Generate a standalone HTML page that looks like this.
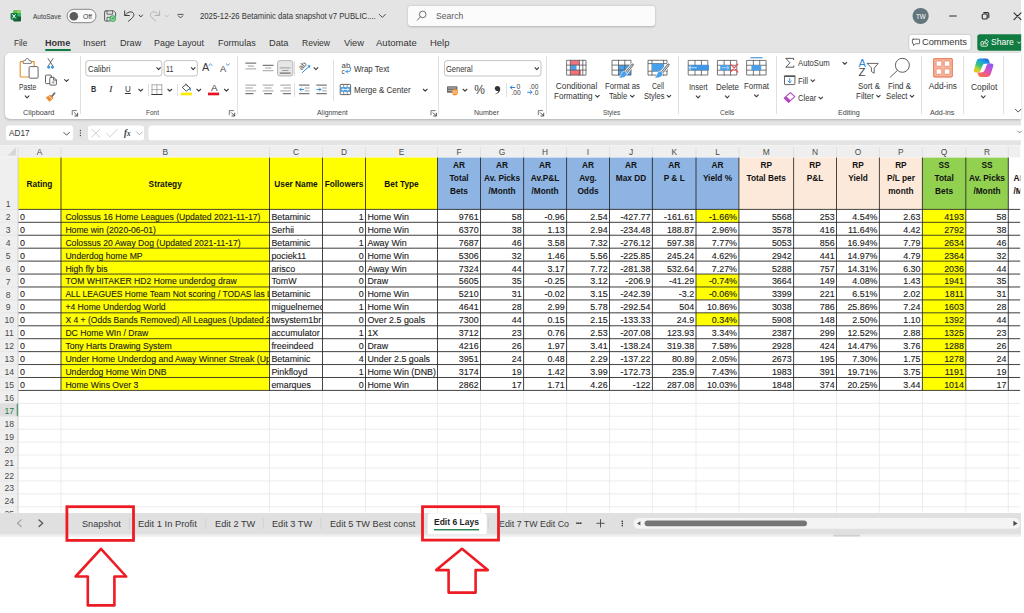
<!DOCTYPE html>
<html lang="en"><head><meta charset="utf-8"><title>Excel - Betaminic data snapshot</title>
<style>
html,body{margin:0;padding:0;background:#fff;}
body{width:1024px;height:613px;overflow:hidden;font-family:"Liberation Sans",sans-serif;color:#343434;}
#app{position:relative;width:1024px;height:613px;overflow:hidden;background:#fff;}
#app div, #app svg{position:absolute;}
.t{position:absolute;white-space:pre;line-height:1;transform-origin:0 50%;}
#chrome{left:0;top:0;width:1021.2px;height:145.3px;background:#e4e4e4;}
#ribbon{left:5.2px;top:52.6px;width:1016px;height:66.2px;background:#fff;border-radius:5px 0 0 5px;box-shadow:0 1px 2.5px rgba(0,0,0,.22);}
.box{background:#fff;border-radius:2.5px;}
.inp{background:#fff;border:0.7px solid #b9b9b9;border-radius:2.5px;box-sizing:border-box;}
.vsep{width:0.7px;background:#e0e0e0;}
#tabbar{left:0;top:512.8px;width:1021.2px;height:21px;background:#e0e0e0;}
#tabstrip{left:0;top:533.8px;width:1021.2px;height:3.2px;background:linear-gradient(#e9e9e9,#f4f4f4);}
#overlay{left:0;top:0;}
#labels{left:0;top:0;width:1024px;height:613px;}

</style></head>
<body>
<div id="app">
<div id="chrome"></div><div id="ribbon"></div><div style="left:408.2px;top:5.8px;width:246.4px;height:20.5px;border-radius:2.4px;background:#fbfbfb;box-shadow:0 0.8px 2.2px rgba(0,0,0,.22);"></div><div style="left:45px;top:48.7px;width:26.2px;height:2.1px;background:#107c41;border-radius:1px;"></div><div class="vsep" style="left:79.85000000000001px;top:56.4px;height:57.4px;"></div><div class="vsep" style="left:236.85px;top:56.4px;height:57.4px;"></div><div class="vsep" style="left:438.34999999999997px;top:56.4px;height:57.4px;"></div><div class="vsep" style="left:545.9499999999999px;top:56.4px;height:57.4px;"></div><div class="vsep" style="left:678.35px;top:56.4px;height:57.4px;"></div><div class="vsep" style="left:775.9499999999999px;top:56.4px;height:57.4px;"></div><div class="vsep" style="left:920.85px;top:56.4px;height:57.4px;"></div><div class="vsep" style="left:963.15px;top:56.4px;height:57.4px;"></div><div class="vsep" style="left:1003.15px;top:56.4px;height:57.4px;"></div><div class="vsep" style="left:333.45px;top:60px;height:41px;"></div><div class="vsep" style="left:147.65px;top:83.5px;height:12.5px;"></div><div class="vsep" style="left:176.65px;top:83.5px;height:12.5px;"></div><div class="vsep" style="left:294.15px;top:82.5px;height:14.5px;"></div><div class="vsep" style="left:294.15px;top:60.5px;height:15.5px;"></div><div class="vsep" style="left:505.95px;top:82.5px;height:14.5px;"></div><div id="tabbar"></div><div id="tabstrip"></div><svg id="overlay" width="1024" height="613" viewBox="0 0 1024 613" font-family="Liberation Sans, sans-serif">
<clipPath id="capp"><rect x="0" y="0" width="1021.2" height="613"/></clipPath><g clip-path="url(#capp)">
<rect x="67.1" y="9.3" width="28.9" height="13.4" rx="6.7" fill="#fafafa" stroke="#868686" stroke-width="1.0"/>
<circle cx="73.8" cy="16.2" r="4.3" fill="#5c5c5c"/>
<circle cx="920.6" cy="16" r="8.1" fill="#63747a"/>
<rect x="908.8" y="34.4" width="62.3" height="15.9" rx="2.6" fill="#fff" stroke="#c6c6c6" stroke-width="0.8"/>
<rect x="977.3" y="34.2" width="50" height="16.5" rx="2.6" fill="#107c41" stroke="none" stroke-width="0.8"/>
<rect x="85.8" y="60.6" width="76.1" height="15.4" rx="2.6" fill="#fff" stroke="#b4b4b4" stroke-width="0.8"/>
<rect x="164.2" y="60.6" width="33.2" height="15.4" rx="2.6" fill="#fff" stroke="#b4b4b4" stroke-width="0.8"/>
<rect x="444.4" y="60.6" width="96.6" height="15.4" rx="2.6" fill="#fff" stroke="#b4b4b4" stroke-width="0.8"/>
<rect x="277.5" y="60.6" width="15.4" height="15.4" rx="2.6" fill="#e6e6e6" stroke="#a6a6a6" stroke-width="0.8"/>
<rect x="6" y="125.5" width="67" height="14.7" rx="2.5" fill="#fff" stroke="none" stroke-width="0.8"/>
<rect x="88" y="125.5" width="56" height="14.7" rx="2.5" fill="#fff" stroke="none" stroke-width="0.8"/>
<rect x="148.5" y="125.5" width="880" height="14.7" rx="2.5" fill="#fff" stroke="none" stroke-width="0.8"/>
</g>
<rect x="0" y="145.3" width="1020.2" height="12.299999999999983" fill="#efefef"/>
<rect x="0" y="157.6" width="18.1" height="355.19999999999993" fill="#efefef"/>
<rect x="18.1" y="157.6" width="1002.1" height="355.19999999999993" fill="#ffffff"/>
<rect x="0" y="403.35" width="18.1" height="12.93" fill="#dedede"/>
<rect x="16.8" y="403.35" width="1.3" height="12.93" fill="#1e7b45"/>
<path d="M15.8 147.6V155.6H7.8Z" fill="#d6d6d6"/>
<path d="M61 157.6V512.8 M269.5 157.6V512.8 M322.5 157.6V512.8 M365.5 157.6V512.8 M437.5 157.6V512.8 M480.5 157.6V512.8 M523.6 157.6V512.8 M566.6 157.6V512.8 M609.5 157.6V512.8 M652.4 157.6V512.8 M696 157.6V512.8 M738.9 157.6V512.8 M793.6 157.6V512.8 M836.5 157.6V512.8 M879.4 157.6V512.8 M922.4 157.6V512.8 M965.8 157.6V512.8 M1008.3 157.6V512.8 M18.1 209.40H1020.2 M18.1 222.33H1020.2 M18.1 235.26H1020.2 M18.1 248.19H1020.2 M18.1 261.12H1020.2 M18.1 274.05H1020.2 M18.1 286.98H1020.2 M18.1 299.91H1020.2 M18.1 312.84H1020.2 M18.1 325.77H1020.2 M18.1 338.70H1020.2 M18.1 351.63H1020.2 M18.1 364.56H1020.2 M18.1 377.49H1020.2 M18.1 390.42H1020.2 M18.1 403.35H1020.2 M18.1 416.28H1020.2 M18.1 429.21H1020.2 M18.1 442.14H1020.2 M18.1 455.07H1020.2 M18.1 468.00H1020.2 M18.1 480.93H1020.2 M18.1 493.86H1020.2 M18.1 506.79H1020.2" stroke="#e7e7e7" stroke-width="0.8" fill="none"/>
<path d="M18.1 147.3V157.6 M61 147.3V157.6 M269.5 147.3V157.6 M322.5 147.3V157.6 M365.5 147.3V157.6 M437.5 147.3V157.6 M480.5 147.3V157.6 M523.6 147.3V157.6 M566.6 147.3V157.6 M609.5 147.3V157.6 M652.4 147.3V157.6 M696 147.3V157.6 M738.9 147.3V157.6 M793.6 147.3V157.6 M836.5 147.3V157.6 M879.4 147.3V157.6 M922.4 147.3V157.6 M965.8 147.3V157.6 M1008.3 147.3V157.6" stroke="#dadada" stroke-width="0.7" fill="none"/>
<path d="M0 209.40H18.1 M0 222.33H18.1 M0 235.26H18.1 M0 248.19H18.1 M0 261.12H18.1 M0 274.05H18.1 M0 286.98H18.1 M0 299.91H18.1 M0 312.84H18.1 M0 325.77H18.1 M0 338.70H18.1 M0 351.63H18.1 M0 364.56H18.1 M0 377.49H18.1 M0 390.42H18.1 M0 403.35H18.1 M0 416.28H18.1 M0 429.21H18.1 M0 442.14H18.1 M0 455.07H18.1 M0 468.00H18.1 M0 480.93H18.1 M0 493.86H18.1 M0 506.79H18.1" stroke="#e2e2e2" stroke-width="0.6" fill="none"/>
<rect x="18.1" y="157.60" width="419.40" height="51.80" fill="#ffff00"/>
<rect x="437.5" y="157.60" width="301.40" height="51.80" fill="#8db4e2"/>
<rect x="738.9" y="157.60" width="183.50" height="51.80" fill="#fde9d9"/>
<rect x="922.4" y="157.60" width="85.90" height="51.80" fill="#92d050"/>
<rect x="61" y="209.40" width="208.50" height="181.02" fill="#ffff00"/>
<rect x="922.4" y="209.40" width="43.40" height="181.02" fill="#ffff00"/>
<rect x="696" y="209.40" width="42.90" height="12.93" fill="#ffff00"/>
<rect x="696" y="274.05" width="42.90" height="12.93" fill="#ffff00"/>
<rect x="696" y="286.98" width="42.90" height="12.93" fill="#ffff00"/>
<rect x="696" y="312.84" width="42.90" height="12.93" fill="#ffff00"/>
<path d="M61 157.6V390.42 M269.5 157.6V390.42 M322.5 157.6V390.42 M365.5 157.6V390.42 M437.5 157.6V390.42 M480.5 157.6V390.42 M523.6 157.6V390.42 M566.6 157.6V390.42 M609.5 157.6V390.42 M652.4 157.6V390.42 M696 157.6V390.42 M738.9 157.6V390.42 M793.6 157.6V390.42 M836.5 157.6V390.42 M879.4 157.6V390.42 M922.4 157.6V390.42 M965.8 157.6V390.42 M1008.3 157.6V390.42 M18.1 209.4H1020.2 M18.1 222.33H1020.2 M18.1 235.26H1020.2 M18.1 248.19H1020.2 M18.1 261.12H1020.2 M18.1 274.05H1020.2 M18.1 286.98H1020.2 M18.1 299.91H1020.2 M18.1 312.84H1020.2 M18.1 325.77H1020.2 M18.1 338.70H1020.2 M18.1 351.63H1020.2 M18.1 364.56H1020.2 M18.1 377.49H1020.2 M18.1 390.42H1020.2" stroke="#262626" stroke-width="0.85" fill="none"/>
<path d="M18.1 157.6V512.8" stroke="#cbcbcb" stroke-width="0.9" fill="none"/>
<text x="39.5" y="154.9" font-size="8.4" fill="#4a4a4a" text-anchor="middle">A</text>
<text x="165.2" y="154.9" font-size="8.4" fill="#4a4a4a" text-anchor="middle">B</text>
<text x="296.0" y="154.9" font-size="8.4" fill="#4a4a4a" text-anchor="middle">C</text>
<text x="344.0" y="154.9" font-size="8.4" fill="#4a4a4a" text-anchor="middle">D</text>
<text x="401.5" y="154.9" font-size="8.4" fill="#4a4a4a" text-anchor="middle">E</text>
<text x="459.0" y="154.9" font-size="8.4" fill="#4a4a4a" text-anchor="middle">F</text>
<text x="502.1" y="154.9" font-size="8.4" fill="#4a4a4a" text-anchor="middle">G</text>
<text x="545.1" y="154.9" font-size="8.4" fill="#4a4a4a" text-anchor="middle">H</text>
<text x="588.0" y="154.9" font-size="8.4" fill="#4a4a4a" text-anchor="middle">I</text>
<text x="631.0" y="154.9" font-size="8.4" fill="#4a4a4a" text-anchor="middle">J</text>
<text x="674.2" y="154.9" font-size="8.4" fill="#4a4a4a" text-anchor="middle">K</text>
<text x="717.5" y="154.9" font-size="8.4" fill="#4a4a4a" text-anchor="middle">L</text>
<text x="766.2" y="154.9" font-size="8.4" fill="#4a4a4a" text-anchor="middle">M</text>
<text x="815.0" y="154.9" font-size="8.4" fill="#4a4a4a" text-anchor="middle">N</text>
<text x="858.0" y="154.9" font-size="8.4" fill="#4a4a4a" text-anchor="middle">O</text>
<text x="900.9" y="154.9" font-size="8.4" fill="#4a4a4a" text-anchor="middle">P</text>
<text x="944.1" y="154.9" font-size="8.4" fill="#4a4a4a" text-anchor="middle">Q</text>
<text x="987.0" y="154.9" font-size="8.4" fill="#4a4a4a" text-anchor="middle">R</text>
<clipPath id="crn"><rect x="0" y="157.6" width="18.1" height="355.19999999999993"/></clipPath><g clip-path="url(#crn)">
<text x="8.2" y="207.00" font-size="8.6" fill="#4a4a4a" text-anchor="middle">1</text>
<text x="8.2" y="219.93" font-size="8.6" fill="#4a4a4a" text-anchor="middle">2</text>
<text x="8.2" y="232.86" font-size="8.6" fill="#4a4a4a" text-anchor="middle">3</text>
<text x="8.2" y="245.79" font-size="8.6" fill="#4a4a4a" text-anchor="middle">4</text>
<text x="8.2" y="258.72" font-size="8.6" fill="#4a4a4a" text-anchor="middle">5</text>
<text x="8.2" y="271.65" font-size="8.6" fill="#4a4a4a" text-anchor="middle">6</text>
<text x="8.2" y="284.58" font-size="8.6" fill="#4a4a4a" text-anchor="middle">7</text>
<text x="8.2" y="297.51" font-size="8.6" fill="#4a4a4a" text-anchor="middle">8</text>
<text x="8.2" y="310.44" font-size="8.6" fill="#4a4a4a" text-anchor="middle">9</text>
<text x="9.2" y="323.37" font-size="8.6" fill="#4a4a4a" text-anchor="middle">10</text>
<text x="9.2" y="336.30" font-size="8.6" fill="#4a4a4a" text-anchor="middle">11</text>
<text x="9.2" y="349.23" font-size="8.6" fill="#4a4a4a" text-anchor="middle">12</text>
<text x="9.2" y="362.16" font-size="8.6" fill="#4a4a4a" text-anchor="middle">13</text>
<text x="9.2" y="375.09" font-size="8.6" fill="#4a4a4a" text-anchor="middle">14</text>
<text x="9.2" y="388.02" font-size="8.6" fill="#4a4a4a" text-anchor="middle">15</text>
<text x="9.2" y="400.95" font-size="8.6" fill="#4a4a4a" text-anchor="middle">16</text>
<text x="9.2" y="413.88" font-size="8.6" fill="#1e7b45" text-anchor="middle">17</text>
<text x="9.2" y="426.81" font-size="8.6" fill="#4a4a4a" text-anchor="middle">18</text>
<text x="9.2" y="439.74" font-size="8.6" fill="#4a4a4a" text-anchor="middle">19</text>
<text x="9.2" y="452.67" font-size="8.6" fill="#4a4a4a" text-anchor="middle">20</text>
<text x="9.2" y="465.60" font-size="8.6" fill="#4a4a4a" text-anchor="middle">21</text>
<text x="9.2" y="478.53" font-size="8.6" fill="#4a4a4a" text-anchor="middle">22</text>
<text x="9.2" y="491.46" font-size="8.6" fill="#4a4a4a" text-anchor="middle">23</text>
<text x="9.2" y="504.39" font-size="8.6" fill="#4a4a4a" text-anchor="middle">24</text>
<text x="9.2" y="517.32" font-size="8.6" fill="#4a4a4a" text-anchor="middle">25</text>
</g>
<text x="39.5" y="187.3" font-size="8.3" font-weight="700" fill="#111" text-anchor="middle">Rating</text>
<text x="165.2" y="187.3" font-size="8.3" font-weight="700" fill="#111" text-anchor="middle">Strategy</text>
<text x="296.0" y="187.3" font-size="8.3" font-weight="700" fill="#111" text-anchor="middle">User Name</text>
<text x="344.0" y="187.3" font-size="8.3" font-weight="700" fill="#111" text-anchor="middle">Followers</text>
<text x="401.5" y="187.3" font-size="8.3" font-weight="700" fill="#111" text-anchor="middle">Bet Type</text>
<text x="459.0" y="167.90" font-size="8.3" font-weight="700" fill="#111" text-anchor="middle">AR</text>
<text x="459.0" y="180.85" font-size="8.3" font-weight="700" fill="#111" text-anchor="middle">Total</text>
<text x="459.0" y="193.80" font-size="8.3" font-weight="700" fill="#111" text-anchor="middle">Bets</text>
<text x="502.1" y="167.90" font-size="8.3" font-weight="700" fill="#111" text-anchor="middle">AR</text>
<text x="502.1" y="180.85" font-size="8.3" font-weight="700" fill="#111" text-anchor="middle">Av. Picks</text>
<text x="502.1" y="193.80" font-size="8.3" font-weight="700" fill="#111" text-anchor="middle">/Month</text>
<text x="545.1" y="167.90" font-size="8.3" font-weight="700" fill="#111" text-anchor="middle">AR</text>
<text x="545.1" y="180.85" font-size="8.3" font-weight="700" fill="#111" text-anchor="middle">Av.P&amp;L</text>
<text x="545.1" y="193.80" font-size="8.3" font-weight="700" fill="#111" text-anchor="middle">/Month</text>
<text x="588.0" y="167.90" font-size="8.3" font-weight="700" fill="#111" text-anchor="middle">AR</text>
<text x="588.0" y="180.85" font-size="8.3" font-weight="700" fill="#111" text-anchor="middle">Avg.</text>
<text x="588.0" y="193.80" font-size="8.3" font-weight="700" fill="#111" text-anchor="middle">Odds</text>
<text x="631.0" y="167.90" font-size="8.3" font-weight="700" fill="#111" text-anchor="middle">AR</text>
<text x="631.0" y="180.85" font-size="8.3" font-weight="700" fill="#111" text-anchor="middle">Max DD</text>
<text x="674.2" y="167.90" font-size="8.3" font-weight="700" fill="#111" text-anchor="middle">AR</text>
<text x="674.2" y="180.85" font-size="8.3" font-weight="700" fill="#111" text-anchor="middle">P &amp; L</text>
<text x="717.5" y="167.90" font-size="8.3" font-weight="700" fill="#111" text-anchor="middle">AR</text>
<text x="717.5" y="180.85" font-size="8.3" font-weight="700" fill="#111" text-anchor="middle">Yield %</text>
<text x="766.2" y="167.90" font-size="8.3" font-weight="700" fill="#111" text-anchor="middle">RP</text>
<text x="766.2" y="180.85" font-size="8.3" font-weight="700" fill="#111" text-anchor="middle">Total Bets</text>
<text x="815.0" y="167.90" font-size="8.3" font-weight="700" fill="#111" text-anchor="middle">RP</text>
<text x="815.0" y="180.85" font-size="8.3" font-weight="700" fill="#111" text-anchor="middle">P&amp;L</text>
<text x="858.0" y="167.90" font-size="8.3" font-weight="700" fill="#111" text-anchor="middle">RP</text>
<text x="858.0" y="180.85" font-size="8.3" font-weight="700" fill="#111" text-anchor="middle">Yield</text>
<text x="900.9" y="167.90" font-size="8.3" font-weight="700" fill="#111" text-anchor="middle">RP</text>
<text x="900.9" y="180.85" font-size="8.3" font-weight="700" fill="#111" text-anchor="middle">P/L per</text>
<text x="900.9" y="193.80" font-size="8.3" font-weight="700" fill="#111" text-anchor="middle">month</text>
<text x="944.1" y="167.90" font-size="8.3" font-weight="700" fill="#111" text-anchor="middle">SS</text>
<text x="944.1" y="180.85" font-size="8.3" font-weight="700" fill="#111" text-anchor="middle">Total</text>
<text x="944.1" y="193.80" font-size="8.3" font-weight="700" fill="#111" text-anchor="middle">Bets</text>
<text x="987.0" y="167.90" font-size="8.3" font-weight="700" fill="#111" text-anchor="middle">SS</text>
<text x="987.0" y="180.85" font-size="8.3" font-weight="700" fill="#111" text-anchor="middle">Av. Picks</text>
<text x="987.0" y="193.80" font-size="8.3" font-weight="700" fill="#111" text-anchor="middle">/Month</text>
<clipPath id="cs"><rect x="1008.3" y="157.6" width="12.0" height="60"/></clipPath>
<g clip-path="url(#cs)"><text x="1013.6" y="180.85" font-size="8.3" font-weight="700" fill="#111">AR</text><text x="1013.4" y="193.8" font-size="8.3" font-weight="700" fill="#111">/Month</text></g>
<clipPath id="cc1"><rect x="61" y="209.4" width="207.9" height="181.01999999999995"/></clipPath>
<clipPath id="cc2"><rect x="269.5" y="209.4" width="52.4" height="181.01999999999995"/></clipPath>
<clipPath id="cc4"><rect x="365.5" y="209.4" width="71.4" height="181.01999999999995"/></clipPath>
<g font-size="8.9" fill="#1c1c1c" stroke="#1c1c1c" stroke-width="0.12"><text x="20.10" y="219.78">0</text><text x="20.10" y="232.71">0</text><text x="20.10" y="245.64">0</text><text x="20.10" y="258.57">0</text><text x="20.10" y="271.50">0</text><text x="20.10" y="284.43">0</text><text x="20.10" y="297.36">0</text><text x="20.10" y="310.29">0</text><text x="20.10" y="323.22">0</text><text x="20.10" y="336.15">0</text><text x="20.10" y="349.08">0</text><text x="20.10" y="362.01">0</text><text x="20.10" y="374.94">0</text><text x="20.10" y="387.87">0</text></g>
<g font-size="8.65" fill="#1c1c1c" stroke="#1c1c1c" stroke-width="0.12" clip-path="url(#cc1)"><text x="65.40" y="219.78">Colossus 16 Home Leagues (Updated 2021-11-17)</text><text x="65.40" y="232.71">Home win (2020-06-01)</text><text x="65.40" y="245.64">Colossus 20 Away Dog (Updated 2021-11-17)</text><text x="65.40" y="258.57">Underdog home MP</text><text x="65.40" y="271.50">High fly bis</text><text x="65.40" y="284.43">TOM WHITAKER HD2 Home underdog draw</text><text x="65.40" y="297.36" font-size="8.48">ALL LEAGUES Home Team Not scoring / TODAS las Ligas</text><text x="65.40" y="310.29">+4 Home Underdog World</text><text x="65.40" y="323.22" font-size="8.55">X 4 + (Odds Bands Removed) All Leagues (Updated 2021-11-17)</text><text x="65.40" y="336.15">DC Home WIn / Draw</text><text x="65.40" y="349.08">Tony Harts Drawing System</text><text x="65.40" y="362.01" font-size="8.78">Under Home Underdog and Away Winner Streak (Updated 2021-11-17)</text><text x="65.40" y="374.94">Underdog Home Win DNB</text><text x="65.40" y="387.87">Home Wins Over 3</text></g>
<g font-size="8.9" fill="#1c1c1c" stroke="#1c1c1c" stroke-width="0.12" clip-path="url(#cc2)"><text x="271.40" y="219.78">Betaminic</text><text x="271.40" y="232.71">Serhii</text><text x="271.40" y="245.64">Betaminic</text><text x="271.40" y="258.57">pociek11</text><text x="271.40" y="271.50">arisco</text><text x="271.40" y="284.43">TomW</text><text x="271.40" y="297.36">Betaminic</text><text x="271.40" y="310.29">miguelnemec</text><text x="271.40" y="323.22">twsystem1br</text><text x="271.40" y="336.15">accumulator</text><text x="271.40" y="349.08">freeindeed</text><text x="271.40" y="362.01">Betaminic</text><text x="271.40" y="374.94">Pinkfloyd</text><text x="271.40" y="387.87">emarques</text></g>
<g font-size="8.9" fill="#1c1c1c" stroke="#1c1c1c" stroke-width="0.12"><text x="363.60" y="219.78" text-anchor="end">1</text><text x="363.60" y="232.71" text-anchor="end">0</text><text x="363.60" y="245.64" text-anchor="end">1</text><text x="363.60" y="258.57" text-anchor="end">0</text><text x="363.60" y="271.50" text-anchor="end">0</text><text x="363.60" y="284.43" text-anchor="end">0</text><text x="363.60" y="297.36" text-anchor="end">0</text><text x="363.60" y="310.29" text-anchor="end">1</text><text x="363.60" y="323.22" text-anchor="end">0</text><text x="363.60" y="336.15" text-anchor="end">1</text><text x="363.60" y="349.08" text-anchor="end">0</text><text x="363.60" y="362.01" text-anchor="end">4</text><text x="363.60" y="374.94" text-anchor="end">1</text><text x="363.60" y="387.87" text-anchor="end">0</text></g>
<g font-size="8.9" fill="#1c1c1c" stroke="#1c1c1c" stroke-width="0.12" clip-path="url(#cc4)"><text x="367.40" y="219.78">Home Win</text><text x="367.40" y="232.71">Home Win</text><text x="367.40" y="245.64">Away Win</text><text x="367.40" y="258.57">Home Win</text><text x="367.40" y="271.50">Away Win</text><text x="367.40" y="284.43">Draw</text><text x="367.40" y="297.36">Home Win</text><text x="367.40" y="310.29">Home Win</text><text x="367.40" y="323.22">Over 2.5 goals</text><text x="367.40" y="336.15">1X</text><text x="367.40" y="349.08">Draw</text><text x="367.40" y="362.01">Under 2.5 goals</text><text x="367.40" y="374.94">Home Win (DNB)</text><text x="367.40" y="387.87">Home Win</text></g>
<g font-size="8.9" fill="#1c1c1c" stroke="#1c1c1c" stroke-width="0.12"><text x="478.60" y="219.78" text-anchor="end">9761</text><text x="478.60" y="232.71" text-anchor="end">6370</text><text x="478.60" y="245.64" text-anchor="end">7687</text><text x="478.60" y="258.57" text-anchor="end">5306</text><text x="478.60" y="271.50" text-anchor="end">7324</text><text x="478.60" y="284.43" text-anchor="end">5605</text><text x="478.60" y="297.36" text-anchor="end">5210</text><text x="478.60" y="310.29" text-anchor="end">4641</text><text x="478.60" y="323.22" text-anchor="end">7300</text><text x="478.60" y="336.15" text-anchor="end">3712</text><text x="478.60" y="349.08" text-anchor="end">4216</text><text x="478.60" y="362.01" text-anchor="end">3951</text><text x="478.60" y="374.94" text-anchor="end">3174</text><text x="478.60" y="387.87" text-anchor="end">2862</text></g>
<g font-size="8.9" fill="#1c1c1c" stroke="#1c1c1c" stroke-width="0.12"><text x="521.70" y="219.78" text-anchor="end">58</text><text x="521.70" y="232.71" text-anchor="end">38</text><text x="521.70" y="245.64" text-anchor="end">46</text><text x="521.70" y="258.57" text-anchor="end">32</text><text x="521.70" y="271.50" text-anchor="end">44</text><text x="521.70" y="284.43" text-anchor="end">35</text><text x="521.70" y="297.36" text-anchor="end">31</text><text x="521.70" y="310.29" text-anchor="end">28</text><text x="521.70" y="323.22" text-anchor="end">44</text><text x="521.70" y="336.15" text-anchor="end">23</text><text x="521.70" y="349.08" text-anchor="end">26</text><text x="521.70" y="362.01" text-anchor="end">24</text><text x="521.70" y="374.94" text-anchor="end">19</text><text x="521.70" y="387.87" text-anchor="end">17</text></g>
<g font-size="8.9" fill="#1c1c1c" stroke="#1c1c1c" stroke-width="0.12"><text x="564.70" y="219.78" text-anchor="end">-0.96</text><text x="564.70" y="232.71" text-anchor="end">1.13</text><text x="564.70" y="245.64" text-anchor="end">3.58</text><text x="564.70" y="258.57" text-anchor="end">1.46</text><text x="564.70" y="271.50" text-anchor="end">3.17</text><text x="564.70" y="284.43" text-anchor="end">-0.25</text><text x="564.70" y="297.36" text-anchor="end">-0.02</text><text x="564.70" y="310.29" text-anchor="end">2.99</text><text x="564.70" y="323.22" text-anchor="end">0.15</text><text x="564.70" y="336.15" text-anchor="end">0.76</text><text x="564.70" y="349.08" text-anchor="end">1.97</text><text x="564.70" y="362.01" text-anchor="end">0.48</text><text x="564.70" y="374.94" text-anchor="end">1.42</text><text x="564.70" y="387.87" text-anchor="end">1.71</text></g>
<g font-size="8.9" fill="#1c1c1c" stroke="#1c1c1c" stroke-width="0.12"><text x="607.60" y="219.78" text-anchor="end">2.54</text><text x="607.60" y="232.71" text-anchor="end">2.94</text><text x="607.60" y="245.64" text-anchor="end">7.32</text><text x="607.60" y="258.57" text-anchor="end">5.56</text><text x="607.60" y="271.50" text-anchor="end">7.72</text><text x="607.60" y="284.43" text-anchor="end">3.12</text><text x="607.60" y="297.36" text-anchor="end">3.15</text><text x="607.60" y="310.29" text-anchor="end">5.78</text><text x="607.60" y="323.22" text-anchor="end">2.15</text><text x="607.60" y="336.15" text-anchor="end">2.53</text><text x="607.60" y="349.08" text-anchor="end">3.41</text><text x="607.60" y="362.01" text-anchor="end">2.29</text><text x="607.60" y="374.94" text-anchor="end">3.99</text><text x="607.60" y="387.87" text-anchor="end">4.26</text></g>
<g font-size="8.9" fill="#1c1c1c" stroke="#1c1c1c" stroke-width="0.12"><text x="650.50" y="219.78" text-anchor="end">-427.77</text><text x="650.50" y="232.71" text-anchor="end">-234.48</text><text x="650.50" y="245.64" text-anchor="end">-276.12</text><text x="650.50" y="258.57" text-anchor="end">-225.85</text><text x="650.50" y="271.50" text-anchor="end">-281.38</text><text x="650.50" y="284.43" text-anchor="end">-206.9</text><text x="650.50" y="297.36" text-anchor="end">-242.39</text><text x="650.50" y="310.29" text-anchor="end">-292.54</text><text x="650.50" y="323.22" text-anchor="end">-133.33</text><text x="650.50" y="336.15" text-anchor="end">-207.08</text><text x="650.50" y="349.08" text-anchor="end">-138.24</text><text x="650.50" y="362.01" text-anchor="end">-137.22</text><text x="650.50" y="374.94" text-anchor="end">-172.73</text><text x="650.50" y="387.87" text-anchor="end">-122</text></g>
<g font-size="8.9" fill="#1c1c1c" stroke="#1c1c1c" stroke-width="0.12"><text x="694.10" y="219.78" text-anchor="end">-161.61</text><text x="694.10" y="232.71" text-anchor="end">188.87</text><text x="694.10" y="245.64" text-anchor="end">597.38</text><text x="694.10" y="258.57" text-anchor="end">245.24</text><text x="694.10" y="271.50" text-anchor="end">532.64</text><text x="694.10" y="284.43" text-anchor="end">-41.29</text><text x="694.10" y="297.36" text-anchor="end">-3.2</text><text x="694.10" y="310.29" text-anchor="end">504</text><text x="694.10" y="323.22" text-anchor="end">24.9</text><text x="694.10" y="336.15" text-anchor="end">123.93</text><text x="694.10" y="349.08" text-anchor="end">319.38</text><text x="694.10" y="362.01" text-anchor="end">80.89</text><text x="694.10" y="374.94" text-anchor="end">235.9</text><text x="694.10" y="387.87" text-anchor="end">287.08</text></g>
<g font-size="8.9" fill="#1c1c1c" stroke="#1c1c1c" stroke-width="0.12"><text x="737.00" y="219.78" text-anchor="end">-1.66%</text><text x="737.00" y="232.71" text-anchor="end">2.96%</text><text x="737.00" y="245.64" text-anchor="end">7.77%</text><text x="737.00" y="258.57" text-anchor="end">4.62%</text><text x="737.00" y="271.50" text-anchor="end">7.27%</text><text x="737.00" y="284.43" text-anchor="end">-0.74%</text><text x="737.00" y="297.36" text-anchor="end">-0.06%</text><text x="737.00" y="310.29" text-anchor="end">10.86%</text><text x="737.00" y="323.22" text-anchor="end">0.34%</text><text x="737.00" y="336.15" text-anchor="end">3.34%</text><text x="737.00" y="349.08" text-anchor="end">7.58%</text><text x="737.00" y="362.01" text-anchor="end">2.05%</text><text x="737.00" y="374.94" text-anchor="end">7.43%</text><text x="737.00" y="387.87" text-anchor="end">10.03%</text></g>
<g font-size="8.9" fill="#1c1c1c" stroke="#1c1c1c" stroke-width="0.12"><text x="791.70" y="219.78" text-anchor="end">5568</text><text x="791.70" y="232.71" text-anchor="end">3578</text><text x="791.70" y="245.64" text-anchor="end">5053</text><text x="791.70" y="258.57" text-anchor="end">2942</text><text x="791.70" y="271.50" text-anchor="end">5288</text><text x="791.70" y="284.43" text-anchor="end">3664</text><text x="791.70" y="297.36" text-anchor="end">3399</text><text x="791.70" y="310.29" text-anchor="end">3038</text><text x="791.70" y="323.22" text-anchor="end">5908</text><text x="791.70" y="336.15" text-anchor="end">2387</text><text x="791.70" y="349.08" text-anchor="end">2928</text><text x="791.70" y="362.01" text-anchor="end">2673</text><text x="791.70" y="374.94" text-anchor="end">1983</text><text x="791.70" y="387.87" text-anchor="end">1848</text></g>
<g font-size="8.9" fill="#1c1c1c" stroke="#1c1c1c" stroke-width="0.12"><text x="834.60" y="219.78" text-anchor="end">253</text><text x="834.60" y="232.71" text-anchor="end">416</text><text x="834.60" y="245.64" text-anchor="end">856</text><text x="834.60" y="258.57" text-anchor="end">441</text><text x="834.60" y="271.50" text-anchor="end">757</text><text x="834.60" y="284.43" text-anchor="end">149</text><text x="834.60" y="297.36" text-anchor="end">221</text><text x="834.60" y="310.29" text-anchor="end">786</text><text x="834.60" y="323.22" text-anchor="end">148</text><text x="834.60" y="336.15" text-anchor="end">299</text><text x="834.60" y="349.08" text-anchor="end">424</text><text x="834.60" y="362.01" text-anchor="end">195</text><text x="834.60" y="374.94" text-anchor="end">391</text><text x="834.60" y="387.87" text-anchor="end">374</text></g>
<g font-size="8.9" fill="#1c1c1c" stroke="#1c1c1c" stroke-width="0.12"><text x="877.50" y="219.78" text-anchor="end">4.54%</text><text x="877.50" y="232.71" text-anchor="end">11.64%</text><text x="877.50" y="245.64" text-anchor="end">16.94%</text><text x="877.50" y="258.57" text-anchor="end">14.97%</text><text x="877.50" y="271.50" text-anchor="end">14.31%</text><text x="877.50" y="284.43" text-anchor="end">4.08%</text><text x="877.50" y="297.36" text-anchor="end">6.51%</text><text x="877.50" y="310.29" text-anchor="end">25.86%</text><text x="877.50" y="323.22" text-anchor="end">2.50%</text><text x="877.50" y="336.15" text-anchor="end">12.52%</text><text x="877.50" y="349.08" text-anchor="end">14.47%</text><text x="877.50" y="362.01" text-anchor="end">7.30%</text><text x="877.50" y="374.94" text-anchor="end">19.71%</text><text x="877.50" y="387.87" text-anchor="end">20.25%</text></g>
<g font-size="8.9" fill="#1c1c1c" stroke="#1c1c1c" stroke-width="0.12"><text x="920.50" y="219.78" text-anchor="end">2.63</text><text x="920.50" y="232.71" text-anchor="end">4.42</text><text x="920.50" y="245.64" text-anchor="end">7.79</text><text x="920.50" y="258.57" text-anchor="end">4.79</text><text x="920.50" y="271.50" text-anchor="end">6.30</text><text x="920.50" y="284.43" text-anchor="end">1.43</text><text x="920.50" y="297.36" text-anchor="end">2.02</text><text x="920.50" y="310.29" text-anchor="end">7.24</text><text x="920.50" y="323.22" text-anchor="end">1.10</text><text x="920.50" y="336.15" text-anchor="end">2.88</text><text x="920.50" y="349.08" text-anchor="end">3.76</text><text x="920.50" y="362.01" text-anchor="end">1.75</text><text x="920.50" y="374.94" text-anchor="end">3.75</text><text x="920.50" y="387.87" text-anchor="end">3.44</text></g>
<g font-size="8.9" fill="#1c1c1c" stroke="#1c1c1c" stroke-width="0.12"><text x="963.90" y="219.78" text-anchor="end">4193</text><text x="963.90" y="232.71" text-anchor="end">2792</text><text x="963.90" y="245.64" text-anchor="end">2634</text><text x="963.90" y="258.57" text-anchor="end">2364</text><text x="963.90" y="271.50" text-anchor="end">2036</text><text x="963.90" y="284.43" text-anchor="end">1941</text><text x="963.90" y="297.36" text-anchor="end">1811</text><text x="963.90" y="310.29" text-anchor="end">1603</text><text x="963.90" y="323.22" text-anchor="end">1392</text><text x="963.90" y="336.15" text-anchor="end">1325</text><text x="963.90" y="349.08" text-anchor="end">1288</text><text x="963.90" y="362.01" text-anchor="end">1278</text><text x="963.90" y="374.94" text-anchor="end">1191</text><text x="963.90" y="387.87" text-anchor="end">1014</text></g>
<g font-size="8.9" fill="#1c1c1c" stroke="#1c1c1c" stroke-width="0.12"><text x="1006.40" y="219.78" text-anchor="end">58</text><text x="1006.40" y="232.71" text-anchor="end">38</text><text x="1006.40" y="245.64" text-anchor="end">46</text><text x="1006.40" y="258.57" text-anchor="end">32</text><text x="1006.40" y="271.50" text-anchor="end">44</text><text x="1006.40" y="284.43" text-anchor="end">35</text><text x="1006.40" y="297.36" text-anchor="end">31</text><text x="1006.40" y="310.29" text-anchor="end">28</text><text x="1006.40" y="323.22" text-anchor="end">44</text><text x="1006.40" y="336.15" text-anchor="end">23</text><text x="1006.40" y="349.08" text-anchor="end">26</text><text x="1006.40" y="362.01" text-anchor="end">24</text><text x="1006.40" y="374.94" text-anchor="end">19</text><text x="1006.40" y="387.87" text-anchor="end">17</text></g>
<g>
<rect x="13.20" y="10.60" width="7.80" height="10.90" rx="1.2" fill="#185c37" stroke="none" stroke-width="0.9" />
<path d="M14.4 10.6H19.8Q21 10.6 21 11.8V13.4H13.2V11.8Q13.2 10.6 14.4 10.6Z" fill="#8fd755"/>
<rect x="13.2" y="10.6" width="4" height="2.8" fill="#5bbd4e"/>
<rect x="13.2" y="13.4" width="7.8" height="3" fill="#21a366"/>
<rect x="17.2" y="13.4" width="3.8" height="3" fill="#33c481" opacity=".6"/>
<rect x="10.60" y="12.90" width="6.80" height="6.80" rx="0.9" fill="#107c41" stroke="none" stroke-width="0.9" />
<path d="M12.6 14.6L15.4 18M15.4 14.6L12.6 18" stroke="#fff" stroke-width="1.0" fill="none" stroke-linecap="round" stroke-linejoin="round" />
</g>
<path d="M105.6 10.8H113.6L115.6 12.8V16 M110 21H105.6Q104.6 21 104.6 20V11.8Q104.6 10.8 105.6 10.8" stroke="#555" stroke-width="0.95" fill="none" stroke-linecap="round" stroke-linejoin="round" />
<path d="M107 10.9V14.2H112.6V10.9 M107 21V17.4H109.6" stroke="#555" stroke-width="0.85" fill="none" stroke-linecap="round" stroke-linejoin="round" />
<circle cx="112.7" cy="18.6" r="3.3" fill="#3fae5b" stroke="none" stroke-width="0.9"/>
<path d="M111 18.2A1.8 1.8 0 0 1 114.2 17.6M114.4 19A1.8 1.8 0 0 1 111.2 19.6" stroke="#fff" stroke-width="0.7" fill="none" stroke-linecap="round" stroke-linejoin="round" />
<path d="M124.7 10.9V15.5H129.3" stroke="#3d3d3d" stroke-width="1.0" fill="none" stroke-linecap="round" stroke-linejoin="round" />
<path d="M124.9 15.3C127.2 12.4 130.8 10.6 133 12.8C135.2 15.2 133 17.8 128.4 21.2" stroke="#3d3d3d" stroke-width="1.0" fill="none" stroke-linecap="round" stroke-linejoin="round" />
<path d="M139.10 15.05L140.80 16.95L142.50 15.05" stroke="#3d3d3d" stroke-width="1.0" fill="none" stroke-linecap="round" stroke-linejoin="round" />
<path d="M159.6 10.9V15.5H155" stroke="#b4b4b4" stroke-width="1.0" fill="none" stroke-linecap="round" stroke-linejoin="round" />
<path d="M159.4 15.3C157.1 12.4 153.5 10.6 151.3 12.8C149.1 15.2 151.3 17.8 155.9 21.2" stroke="#b4b4b4" stroke-width="1.0" fill="none" stroke-linecap="round" stroke-linejoin="round" />
<path d="M165.10 15.05L166.80 16.95L168.50 15.05" stroke="#c0c0c0" stroke-width="1.0" fill="none" stroke-linecap="round" stroke-linejoin="round" />
<path d="M178 14.4H183" stroke="#444" stroke-width="0.9" fill="none" stroke-linecap="round" stroke-linejoin="round" />
<path d="M178.30 15.80L180.50 18.00L182.70 15.80" stroke="#444" stroke-width="0.95" fill="none" stroke-linecap="round" stroke-linejoin="round" />
<path d="M379.20 14.35L382.30 17.45L385.40 14.35" stroke="#444" stroke-width="0.95" fill="none" stroke-linecap="round" stroke-linejoin="round" />
<circle cx="422.7" cy="14.4" r="3.3" fill="none" stroke="#666" stroke-width="0.95"/>
<path d="M420.3 16.9L417.3 20.2" stroke="#666" stroke-width="0.95" fill="none" stroke-linecap="round" stroke-linejoin="round" />
<path d="M949.7 16H956.3" stroke="#2a2a2a" stroke-width="1.15" fill="none" stroke-linecap="round" stroke-linejoin="round" />
<rect x="982.20" y="14.00" width="5.00" height="5.00" rx="1.3" fill="none" stroke="#2a2a2a" stroke-width="1.15" />
<path d="M983.8 12.6H987.4Q988.8 12.6 988.8 14V17.6" stroke="#2a2a2a" stroke-width="1.1" fill="none" stroke-linecap="round" stroke-linejoin="round" />
<path d="M1014 12.8L1021 19.6M1021 12.8L1014 19.6" stroke="#2a2a2a" stroke-width="1.05" fill="none" stroke-linecap="round" stroke-linejoin="round" />
<path d="M913.2 39.2H918.8Q919.6 39.2 919.6 40V43Q919.6 43.8 918.8 43.8H915.4L913.6 45.6V43.8H913.2Q912.4 43.8 912.4 43V40Q912.4 39.2 913.2 39.2Z" stroke="#444" stroke-width="0.8" fill="none" stroke-linecap="round" stroke-linejoin="round" />
<path d="M983 41.6H981.8Q981 41.6 981 42.4V45.4Q981 46.2 981.8 46.2H986.6Q987.4 46.2 987.4 45.4V44.4" stroke="#fff" stroke-width="0.85" fill="none" stroke-linecap="round" stroke-linejoin="round" />
<path d="M983 44.3Q983.4 41 986 40.9V39.3L988.6 41.8L986 44.2V42.7Q984.2 42.7 983 44.3Z" stroke="#fff" stroke-width="0.75" fill="none" stroke-linecap="round" stroke-linejoin="round" />
<path d="M1017.60 41.90L1019.00 43.50L1020.40 41.90" stroke="#fff" stroke-width="0.85" fill="none" stroke-linecap="round" stroke-linejoin="round" />
<path d="M23.2 61.6H21Q20.2 61.6 20.2 62.4V76.2Q20.2 77 21 77H28.6 M31.2 61.6H33.4Q34.2 61.6 34.2 62.4V66" stroke="#e8912d" stroke-width="1.15" fill="none" stroke-linecap="round" stroke-linejoin="round" />
<path d="M23.2 63V61.3Q23.2 60.6 24 60.6H25.3Q25.6 58.4 27.2 58.4Q28.8 58.4 29.1 60.6H30.4Q31.2 60.6 31.2 61.3V63Z" stroke="#6a6a6a" stroke-width="0.85" fill="#fff" stroke-linecap="round" stroke-linejoin="round" />
<rect x="29.10" y="66.60" width="9.00" height="11.60" rx="1.1" fill="#fff" stroke="#666" stroke-width="1.0" />
<path d="M25.20 95.95L27.10 97.85L29.00 95.95" stroke="#3c3c3c" stroke-width="1.1" fill="none" stroke-linecap="round" stroke-linejoin="round" />
<path d="M48.1 58.6L52.6 65.6M53 58.6L48.5 65.6" stroke="#555" stroke-width="0.9" fill="none" stroke-linecap="round" stroke-linejoin="round" />
<circle cx="48.6" cy="67.1" r="1.55" fill="#3a96dd" stroke="none" stroke-width="0.9"/>
<circle cx="52.5" cy="67.1" r="1.55" fill="#3a96dd" stroke="none" stroke-width="0.9"/>
<path d="M49.6 83.6H46.3Q45.5 83.6 45.5 82.8V75.9Q45.5 75.1 46.3 75.1H50.6Q51.4 75.1 51.4 75.9V77" stroke="#555" stroke-width="0.9" fill="none" stroke-linecap="round" stroke-linejoin="round" />
<path d="M50.6 77.3H53.8L56.4 79.9V84.3Q56.4 85.1 55.6 85.1H50.6Q49.8 85.1 49.8 84.3V78.1Q49.8 77.3 50.6 77.3Z M53.6 77.5V80.1H56.2" stroke="#555" stroke-width="0.9" fill="none" stroke-linecap="round" stroke-linejoin="round" />
<path d="M52 82.2H54.4M53.2 81V83.4" stroke="#777" stroke-width="0.6" fill="none" stroke-linecap="round" stroke-linejoin="round" />
<path d="M64.60 79.55L66.50 81.45L68.40 79.55" stroke="#3c3c3c" stroke-width="1.1" fill="none" stroke-linecap="round" stroke-linejoin="round" />
<path d="M51.6 96.6L54.6 93.2" stroke="#666" stroke-width="1.7" fill="none" stroke-linecap="round" stroke-linejoin="round" />
<path d="M50.2 94.8L53.6 98.2L49.4 101.8L45.8 97.4Z" fill="#ec8b35"/>
<path d="M48.9 96L52.5 99.4" stroke="#fff" stroke-width="0.7" fill="none" stroke-linecap="round" stroke-linejoin="round" />
<path d="M72.2 114.8V110.6H76.4" stroke="#555" stroke-width="0.8" fill="none" stroke-linecap="round" stroke-linejoin="round" />
<path d="M74.4 112.8L77.4 115.8M77.60000000000001 113.19999999999999V116.0H74.8" stroke="#444" stroke-width="0.9" fill="none" stroke-linecap="round" stroke-linejoin="round" />
<path d="M156.80 67.65L158.60 69.55L160.40 67.65" stroke="#3c3c3c" stroke-width="1.1" fill="none" stroke-linecap="round" stroke-linejoin="round" />
<path d="M191.40 67.65L193.20 69.55L195.00 67.65" stroke="#3c3c3c" stroke-width="1.1" fill="none" stroke-linecap="round" stroke-linejoin="round" />
<path d="M208.9 65.4L210.5 63.9L212.1 65.4" stroke="#2b88d8" stroke-width="0.9" fill="none" stroke-linecap="round" stroke-linejoin="round" />
<path d="M226.3 63.9L227.9 65.4L229.5 63.9" stroke="#2b88d8" stroke-width="0.9" fill="none" stroke-linecap="round" stroke-linejoin="round" />
<path d="M138.80 89.25L140.70 91.15L142.60 89.25" stroke="#3c3c3c" stroke-width="1.1" fill="none" stroke-linecap="round" stroke-linejoin="round" />
<path d="M152 84.8H161.8M152 89.6H161.8M152 84.8V94.4M156.9 84.8V94.4M161.8 84.8V94.4" stroke="#9a9a9a" stroke-width="0.8" fill="none" stroke-linecap="round" stroke-linejoin="round" />
<path d="M151.8 94.5H162" stroke="#3a3a3a" stroke-width="1.1" fill="none" stroke-linecap="round" stroke-linejoin="round" />
<path d="M167.90 89.25L169.80 91.15L171.70 89.25" stroke="#3c3c3c" stroke-width="1.1" fill="none" stroke-linecap="round" stroke-linejoin="round" />
<path d="M186.6 84.6L190.2 88.2L186.2 91.2L182.6 87.6Z" stroke="#444" stroke-width="0.9" fill="none" stroke-linecap="round" stroke-linejoin="round" />
<path d="M185.4 84L187.4 86" stroke="#444" stroke-width="0.8" fill="none" stroke-linecap="round" stroke-linejoin="round" />
<path d="M190.2 87.2Q191.4 89.2 191 90.6Q190 91 189.6 90Q189.6 88.8 190.2 87.2Z" fill="#2b88d8"/>
<rect x="180.90" y="92.60" width="11.10" height="2.70" rx="0" fill="#ffeb00" stroke="none" stroke-width="0.9" />
<path d="M196.90 89.25L198.80 91.15L200.70 89.25" stroke="#3c3c3c" stroke-width="1.1" fill="none" stroke-linecap="round" stroke-linejoin="round" />
<rect x="208.00" y="92.60" width="11.10" height="2.70" rx="0" fill="#e81123" stroke="none" stroke-width="0.9" />
<path d="M224.50 89.25L226.40 91.15L228.30 89.25" stroke="#3c3c3c" stroke-width="1.1" fill="none" stroke-linecap="round" stroke-linejoin="round" />
<path d="M229.3 114.8V110.6H233.5" stroke="#555" stroke-width="0.8" fill="none" stroke-linecap="round" stroke-linejoin="round" />
<path d="M231.5 112.8L234.5 115.8M234.70000000000002 113.19999999999999V116.0H231.9" stroke="#444" stroke-width="0.9" fill="none" stroke-linecap="round" stroke-linejoin="round" />
<path d="M245.8 63.1H255.8" stroke="#3a3a3a" stroke-width="0.85" fill="none" stroke-linecap="round" stroke-linejoin="round" />
<path d="M248.2 66.1H253.6" stroke="#909090" stroke-width="0.85" fill="none" stroke-linecap="round" stroke-linejoin="round" />
<path d="M245.8 68.9H255.8" stroke="#909090" stroke-width="0.85" fill="none" stroke-linecap="round" stroke-linejoin="round" />
<path d="M263.1 65.3H273.1" stroke="#3a3a3a" stroke-width="0.85" fill="none" stroke-linecap="round" stroke-linejoin="round" />
<path d="M265.5 68.0H270.9" stroke="#909090" stroke-width="0.85" fill="none" stroke-linecap="round" stroke-linejoin="round" />
<path d="M263.1 70.7H273.1" stroke="#909090" stroke-width="0.85" fill="none" stroke-linecap="round" stroke-linejoin="round" />
<path d="M280.2 67.9H290.2" stroke="#909090" stroke-width="0.85" fill="none" stroke-linecap="round" stroke-linejoin="round" />
<path d="M282.6 70.5H288" stroke="#909090" stroke-width="0.85" fill="none" stroke-linecap="round" stroke-linejoin="round" />
<path d="M280.2 73.1H290.2" stroke="#3a3a3a" stroke-width="0.85" fill="none" stroke-linecap="round" stroke-linejoin="round" />
<text x="0" y="0" font-size="7.6" fill="#444" transform="translate(301.4 70.6) rotate(-48)">ab</text>
<path d="M302.2 72.6L309.4 66.2" stroke="#2b88d8" stroke-width="1.0" fill="none" stroke-linecap="round" stroke-linejoin="round" />
<path d="M310.4 65.2L309.9 68.1L307.4 65.6Z" fill="#2b88d8"/>
<path d="M314.00 67.65L315.90 69.55L317.80 67.65" stroke="#3c3c3c" stroke-width="1.1" fill="none" stroke-linecap="round" stroke-linejoin="round" />
<path d="M245.8 85.1H255.8" stroke="#909090" stroke-width="0.85" fill="none" stroke-linecap="round" stroke-linejoin="round" />
<path d="M245.8 88.0H252.6" stroke="#909090" stroke-width="0.85" fill="none" stroke-linecap="round" stroke-linejoin="round" />
<path d="M245.8 90.9H255.8" stroke="#909090" stroke-width="0.85" fill="none" stroke-linecap="round" stroke-linejoin="round" />
<path d="M245.8 93.7H253.2" stroke="#3a3a3a" stroke-width="0.85" fill="none" stroke-linecap="round" stroke-linejoin="round" />
<path d="M263.1 85.1H273.1" stroke="#909090" stroke-width="0.85" fill="none" stroke-linecap="round" stroke-linejoin="round" />
<path d="M265 88.0H271.2" stroke="#909090" stroke-width="0.85" fill="none" stroke-linecap="round" stroke-linejoin="round" />
<path d="M263.1 90.9H273.1" stroke="#909090" stroke-width="0.85" fill="none" stroke-linecap="round" stroke-linejoin="round" />
<path d="M264.6 93.7H271.6" stroke="#3a3a3a" stroke-width="0.85" fill="none" stroke-linecap="round" stroke-linejoin="round" />
<path d="M280.6 85.1H290.6" stroke="#909090" stroke-width="0.85" fill="none" stroke-linecap="round" stroke-linejoin="round" />
<path d="M283.8 88.0H290.6" stroke="#909090" stroke-width="0.85" fill="none" stroke-linecap="round" stroke-linejoin="round" />
<path d="M280.6 90.9H290.6" stroke="#909090" stroke-width="0.85" fill="none" stroke-linecap="round" stroke-linejoin="round" />
<path d="M283.2 93.7H290.6" stroke="#3a3a3a" stroke-width="0.85" fill="none" stroke-linecap="round" stroke-linejoin="round" />
<path d="M299.4 85.1H309.1" stroke="#3a3a3a" stroke-width="0.85" fill="none" stroke-linecap="round" stroke-linejoin="round" />
<path d="M305.2 88.0H309.1" stroke="#909090" stroke-width="0.85" fill="none" stroke-linecap="round" stroke-linejoin="round" />
<path d="M305.2 90.9H309.1" stroke="#909090" stroke-width="0.85" fill="none" stroke-linecap="round" stroke-linejoin="round" />
<path d="M299.4 93.7H309.1" stroke="#3a3a3a" stroke-width="0.85" fill="none" stroke-linecap="round" stroke-linejoin="round" />
<path d="M303.8 89.5H299.8M301.4 87.9L299.8 89.5L301.4 91.1" stroke="#2b88d8" stroke-width="0.9" fill="none" stroke-linecap="round" stroke-linejoin="round" />
<path d="M316.7 85.1H326.4" stroke="#3a3a3a" stroke-width="0.85" fill="none" stroke-linecap="round" stroke-linejoin="round" />
<path d="M322.5 88.0H326.4" stroke="#909090" stroke-width="0.85" fill="none" stroke-linecap="round" stroke-linejoin="round" />
<path d="M322.5 90.9H326.4" stroke="#909090" stroke-width="0.85" fill="none" stroke-linecap="round" stroke-linejoin="round" />
<path d="M316.7 93.7H326.4" stroke="#3a3a3a" stroke-width="0.85" fill="none" stroke-linecap="round" stroke-linejoin="round" />
<path d="M316.9 89.5H320.9M319.3 87.9L320.9 89.5L319.3 91.1" stroke="#2b88d8" stroke-width="0.9" fill="none" stroke-linecap="round" stroke-linejoin="round" />
<text x="341.6" y="68.3" font-size="6.4" fill="#444" textLength="8.6" lengthAdjust="spacingAndGlyphs">ab</text>
<text x="341.6" y="73.6" font-size="6.4" fill="#444">c</text>
<path d="M350.6 67.5V69.4Q350.6 71.6 348.4 71.6H346.2M347.6 70L346 71.6L347.6 73.2" stroke="#2b88d8" stroke-width="0.9" fill="none" stroke-linecap="round" stroke-linejoin="round" />
<rect x="340.20" y="84.40" width="10.40" height="10.20" rx="0.8" fill="#fff" stroke="#555" stroke-width="0.9" />
<rect x="340.70" y="87.10" width="9.40" height="4.80" rx="0" fill="#4aa0e6" stroke="none" stroke-width="0.9" />
<path d="M343.7 84.6V87M347.2 84.6V87M343.7 92V94.4M347.2 92V94.4" stroke="#666" stroke-width="0.7" fill="none" stroke-linecap="round" stroke-linejoin="round" />
<path d="M342.2 89.5H348.6M343.3 88.3L342.1 89.5L343.3 90.7M347.5 88.3L348.7 89.5L347.5 90.7" stroke="#fff" stroke-width="0.75" fill="none" stroke-linecap="round" stroke-linejoin="round" />
<path d="M423.30 89.25L425.20 91.15L427.10 89.25" stroke="#3c3c3c" stroke-width="1.1" fill="none" stroke-linecap="round" stroke-linejoin="round" />
<path d="M431 114.8V110.6H435.2" stroke="#555" stroke-width="0.8" fill="none" stroke-linecap="round" stroke-linejoin="round" />
<path d="M433.2 112.8L436.2 115.8M436.4 113.19999999999999V116.0H433.6" stroke="#444" stroke-width="0.9" fill="none" stroke-linecap="round" stroke-linejoin="round" />
<path d="M535.00 67.65L536.80 69.55L538.60 67.65" stroke="#3c3c3c" stroke-width="1.1" fill="none" stroke-linecap="round" stroke-linejoin="round" />
<rect x="447.00" y="86.20" width="10.40" height="6.60" rx="0.6" fill="#6d6d6d" stroke="none" stroke-width="0.9" />
<path d="M448.6 88H455.6M448.6 90.4H452" stroke="#d8d8d8" stroke-width="0.7" fill="none" stroke-linecap="round" stroke-linejoin="round" />
<ellipse cx="454.9" cy="92.2" rx="3" ry="3.1" fill="#f08a24"/>
<path d="M452.8 91.2H457M452.8 93.2H457" stroke="#fff" stroke-width="0.7" fill="none" stroke-linecap="round" stroke-linejoin="round" />
<path d="M463.10 89.25L465.00 91.15L466.90 89.25" stroke="#3c3c3c" stroke-width="1.1" fill="none" stroke-linecap="round" stroke-linejoin="round" />
<path d="M497.4 86A2.5 2.5 0 1 0 498.3 90.8C498.2 92.3 496.9 93.5 494.8 94.3C498.6 93.8 500.2 91.4 500.2 89C500.2 87.2 499 86 497.4 86Z" fill="#333"/>
<path d="M514.8 87.5H510.4M512 85.9L510.4 87.5L512 89.1" stroke="#2b88d8" stroke-width="1.0" fill="none" stroke-linecap="round" stroke-linejoin="round" />
<g font-size="6.4" fill="#3a3a3a">
<text x="516.6" y="89.3" textLength="3.8" lengthAdjust="spacingAndGlyphs">0</text>
<text x="511.4" y="94.8" textLength="9.2" lengthAdjust="spacingAndGlyphs">.00</text>
<text x="529.2" y="89.3" textLength="9.2" lengthAdjust="spacingAndGlyphs">.00</text>
<text x="532.8" y="94.8" textLength="5.6" lengthAdjust="spacingAndGlyphs">.0</text>
</g>
<path d="M527.6 92.3H532M530.4 90.7L532 92.3L530.4 93.9" stroke="#2b88d8" stroke-width="1.0" fill="none" stroke-linecap="round" stroke-linejoin="round" />
<path d="M538.3 114.8V110.6H542.5" stroke="#555" stroke-width="0.8" fill="none" stroke-linecap="round" stroke-linejoin="round" />
<path d="M540.5 112.8L543.5 115.8M543.6999999999999 113.19999999999999V116.0H540.9" stroke="#444" stroke-width="0.9" fill="none" stroke-linecap="round" stroke-linejoin="round" />
<rect x="570.30" y="60.40" width="8.90" height="4.70" rx="0" fill="#f4707b" stroke="none" stroke-width="0.9" />
<rect x="570.30" y="65.10" width="6.20" height="5.00" rx="0" fill="#4a9fea" stroke="none" stroke-width="0.9" />
<rect x="570.30" y="70.10" width="10.60" height="5.00" rx="0" fill="#f4707b" stroke="none" stroke-width="0.9" />
<path d="M567 60.3H586V75.1H567ZM567 65.1H586M567 70.1H586M570.3 60.3V75.1M579.4 60.3V75.1M582.8 60.3V75.1" stroke="#555" stroke-width="0.8" fill="none" stroke-linecap="round" stroke-linejoin="round" />
<path d="M595.60 95.30L597.40 97.10L599.20 95.30" stroke="#3c3c3c" stroke-width="1.1" fill="none" stroke-linecap="round" stroke-linejoin="round" />
<rect x="618.50" y="65.10" width="12.50" height="9.90" rx="0" fill="#4a9fea" stroke="none" stroke-width="0.9" />
<path d="M612.4 60.3H631V75.1H612.4ZM612.4 65.1H631M612.4 70.1H631M618.5 60.3V75.1M624.8 60.3V75.1" stroke="#555" stroke-width="0.8" fill="none" stroke-linecap="round" stroke-linejoin="round" />
<path d="M632.6 64.8L625.2 73.6" stroke="#fff" stroke-width="4.0" fill="none" stroke-linecap="round" stroke-linejoin="round" />
<path d="M632.6 64.8L625.6 73.2" stroke="#6a6a6a" stroke-width="2.5" fill="none" stroke-linecap="round" stroke-linejoin="round" />
<path d="M632.4 65L625.8 73" stroke="#f4f4f4" stroke-width="0.9" fill="none" stroke-linecap="round" stroke-linejoin="round" />
<path d="M626.9 72.9L624.3 70.9Q621.4 71.6 621.2 74.2Q620.8 76.6 618.2 77.6Q623.8 78.8 626.2 75.8Q627.2 74.2 626.9 72.9Z" fill="#4a9fea" stroke="#fff" stroke-width="0.5"/>
<path d="M630.50 95.30L632.30 97.10L634.10 95.30" stroke="#3c3c3c" stroke-width="1.1" fill="none" stroke-linecap="round" stroke-linejoin="round" />
<path d="M648.4 60.3H667V75.1H648.4ZM648.4 63.6H667M648.4 71.2H667M652 60.3V75.1M663.6 60.3V75.1" stroke="#555" stroke-width="0.8" fill="none" stroke-linecap="round" stroke-linejoin="round" />
<rect x="652.00" y="63.60" width="11.60" height="7.60" rx="0" fill="#4a9fea" stroke="none" stroke-width="0.9" />
<path d="M668.4 64.8L661.0 73.6" stroke="#fff" stroke-width="4.0" fill="none" stroke-linecap="round" stroke-linejoin="round" />
<path d="M668.4 64.8L661.4 73.2" stroke="#6a6a6a" stroke-width="2.5" fill="none" stroke-linecap="round" stroke-linejoin="round" />
<path d="M668.1999999999999 65L661.5999999999999 73" stroke="#f4f4f4" stroke-width="0.9" fill="none" stroke-linecap="round" stroke-linejoin="round" />
<path d="M662.6999999999999 72.9L660.0999999999999 70.9Q657.1999999999999 71.6 657.0 74.2Q656.5999999999999 76.6 654.0 77.6Q659.5999999999999 78.8 662.0 75.8Q663.0 74.2 662.6999999999999 72.9Z" fill="#4a9fea" stroke="#fff" stroke-width="0.5"/>
<path d="M667.10 95.30L668.90 97.10L670.70 95.30" stroke="#3c3c3c" stroke-width="1.1" fill="none" stroke-linecap="round" stroke-linejoin="round" />
<path d="M688.6 60.4H707.8V75H688.6ZM688.6 65.27H707.8M688.6 70.13H707.8M695.00 60.4V75M701.40 60.4V75" stroke="#555" stroke-width="0.8" fill="none" stroke-linecap="round" stroke-linejoin="round" />
<path d="M690.6 65.1H709V70.3H690.6L687.5 67.7Z" fill="#3f96e6"/>
<path d="M689 67.7H696.4M690.8 66L689 67.7L690.8 69.4" stroke="#fff" stroke-width="0.7" fill="none" stroke-linecap="round" stroke-linejoin="round" />
<path d="M696.20 95.95L698.10 97.85L700.00 95.95" stroke="#3c3c3c" stroke-width="1.1" fill="none" stroke-linecap="round" stroke-linejoin="round" />
<path d="M717.8 60.4H736.8V75H717.8ZM717.8 65.27H736.8M717.8 70.13H736.8M724.13 60.4V75M730.47 60.4V75" stroke="#555" stroke-width="0.8" fill="none" stroke-linecap="round" stroke-linejoin="round" />
<rect x="720.20" y="65.10" width="10.00" height="5.20" rx="0" fill="#4a9fea" stroke="none" stroke-width="0.9" />
<path d="M722 67.7H728.6M727.2 66.2L728.8 67.7L727.2 69.2" stroke="#cfe6fb" stroke-width="0.7" fill="none" stroke-linecap="round" stroke-linejoin="round" />
<path d="M730.6 64.2L737.8 72M737.8 64.2L730.6 72" stroke="#f0525a" stroke-width="1.2" fill="none" stroke-linecap="round" stroke-linejoin="round" />
<path d="M725.30 95.95L727.20 97.85L729.10 95.95" stroke="#3c3c3c" stroke-width="1.1" fill="none" stroke-linecap="round" stroke-linejoin="round" />
<path d="M747 60.4H766.1V75H747ZM747 65.27H766.1M747 70.13H766.1M753.37 60.4V75M759.73 60.4V75" stroke="#555" stroke-width="0.8" fill="none" stroke-linecap="round" stroke-linejoin="round" />
<rect x="751.40" y="65.10" width="9.80" height="5.20" rx="0" fill="#4a9fea" stroke="none" stroke-width="0.9" />
<path d="M750.8 57.8H762.2" stroke="#2b88d8" stroke-width="1.1" fill="none" stroke-linecap="round" stroke-linejoin="round" />
<path d="M754.50 94.85L756.40 96.75L758.30 94.85" stroke="#3c3c3c" stroke-width="1.1" fill="none" stroke-linecap="round" stroke-linejoin="round" />
<path d="M793.6 59.6V58.4H785.8L790 62.8L785.8 67.2H793.8V66" stroke="#444" stroke-width="0.9" fill="none" stroke-linecap="round" stroke-linejoin="round" />
<path d="M842.90 62.35L844.80 64.25L846.70 62.35" stroke="#3c3c3c" stroke-width="1.1" fill="none" stroke-linecap="round" stroke-linejoin="round" />
<rect x="784.50" y="76.00" width="10.40" height="8.60" rx="0.6" fill="#fff" stroke="#555" stroke-width="0.9" />
<path d="M784.5 76.2H794.9" stroke="#555" stroke-width="1.5" fill="none" stroke-linecap="round" stroke-linejoin="round" />
<path d="M789.7 78.4V82.6M788 81L789.7 82.7L791.4 81" stroke="#2b88d8" stroke-width="0.9" fill="none" stroke-linecap="round" stroke-linejoin="round" />
<path d="M811.00 79.80L812.80 81.60L814.60 79.80" stroke="#3c3c3c" stroke-width="1.1" fill="none" stroke-linecap="round" stroke-linejoin="round" />
<path d="M790.4 92.6L794.8 96.6L788.6 102.4L784.2 98.2Z" fill="none" stroke="#b146c2" stroke-width="1.1" stroke-linejoin="round"/>
<path d="M786.4 96.4L790.8 100.4L788.6 102.4L784.2 98.2Z" fill="#b146c2"/>
<path d="M819.00 97.10L820.80 98.90L822.60 97.10" stroke="#3c3c3c" stroke-width="1.1" fill="none" stroke-linecap="round" stroke-linejoin="round" />
<text x="858.4" y="66.6" font-size="10" fill="#2b88d8" textLength="7.4" lengthAdjust="spacingAndGlyphs">A</text>
<text x="858.6" y="76.2" font-size="10.4" fill="#444" textLength="7" lengthAdjust="spacingAndGlyphs">Z</text>
<path d="M867.4 63.4H878.2L874.2 68.2V73.2L871.4 71.6V68.2Z" stroke="#555" stroke-width="0.9" fill="none" stroke-linecap="round" stroke-linejoin="round" />
<path d="M876.70 95.30L878.40 97.10L880.10 95.30" stroke="#3c3c3c" stroke-width="1.1" fill="none" stroke-linecap="round" stroke-linejoin="round" />
<circle cx="902.4" cy="65.3" r="7" fill="none" stroke="#555" stroke-width="0.95"/>
<path d="M897.4 70.4L890.4 77" stroke="#555" stroke-width="0.95" fill="none" stroke-linecap="round" stroke-linejoin="round" />
<path d="M910.20 95.30L912.00 97.10L913.80 95.30" stroke="#3c3c3c" stroke-width="1.1" fill="none" stroke-linecap="round" stroke-linejoin="round" />
<rect x="933.00" y="58.00" width="19.90" height="19.40" rx="1.6" fill="#f6b8a2" stroke="none" stroke-width="0.9" />
<rect x="933.60" y="58.60" width="18.70" height="18.20" rx="1.4" fill="none" stroke="#ea8663" stroke-width="1.2" />
<rect x="936.10" y="60.90" width="5.70" height="5.40" rx="0.5" fill="#fff" stroke="#ec8a6a" stroke-width="0.9" />
<rect x="944.20" y="60.90" width="5.70" height="5.40" rx="0.5" fill="#fff" stroke="#ec8a6a" stroke-width="0.9" />
<rect x="936.10" y="68.90" width="5.70" height="5.40" rx="0.5" fill="#fff" stroke="#ec8a6a" stroke-width="0.9" />
<rect x="944.20" y="68.90" width="5.70" height="5.40" rx="0.5" fill="#fff" stroke="#ec8a6a" stroke-width="0.9" />
<defs>
<linearGradient id="cpA" x1=".85" y1="0" x2=".15" y2="1"><stop offset="0" stop-color="#2458d8"/><stop offset=".3" stop-color="#1fa2e6"/><stop offset=".58" stop-color="#36c27c"/><stop offset=".82" stop-color="#c6d52c"/><stop offset="1" stop-color="#f8bd1c"/></linearGradient>
<linearGradient id="cpB" x1=".85" y1="0" x2=".15" y2="1"><stop offset="0" stop-color="#8a5cf6"/><stop offset=".35" stop-color="#c653d4"/><stop offset=".65" stop-color="#ee5a8a"/><stop offset="1" stop-color="#f9783a"/></linearGradient>
</defs>
<path d="M979.8 58.4H986.2Q988.4 58.4 989 60.4L990 63.8H985.2Q983 63.8 982.2 66.2L980.4 71Q979.8 72.4 978.2 72.4H976Q973.2 72.4 974 69.8L976.6 60.8Q977.4 58.4 979.8 58.4Z" fill="url(#cpA)"/>
<path d="M987.4 77H981Q978.8 77 978.2 75L977.4 72.4H981.6Q984 72.4 984.8 70L986.8 65Q987.4 63.6 989 63.6H991.2Q994 63.6 993.2 66.2L990.6 74.6Q989.8 77 987.4 77Z" fill="url(#cpB)"/>
<path d="M981.30 95.95L983.20 97.85L985.10 95.95" stroke="#3c3c3c" stroke-width="1.1" fill="none" stroke-linecap="round" stroke-linejoin="round" />
<path d="M1015.50 109.30L1018.20 112.10L1020.90 109.30" stroke="#444" stroke-width="0.95" fill="none" stroke-linecap="round" stroke-linejoin="round" />
<path d="M63.80 132.40L66.60 135.20L69.40 132.40" stroke="#444" stroke-width="0.95" fill="none" stroke-linecap="round" stroke-linejoin="round" />
<circle cx="80.4" cy="130.5" r="0.65" fill="#444" stroke="none" stroke-width="0.9"/>
<circle cx="80.4" cy="133" r="0.65" fill="#444" stroke="none" stroke-width="0.9"/>
<circle cx="80.4" cy="135.5" r="0.65" fill="#444" stroke="none" stroke-width="0.9"/>
<path d="M91.8 129.2L99.8 137.2M99.8 129.2L91.8 137.2" stroke="#c2c2c2" stroke-width="0.8" fill="none" stroke-linecap="round" stroke-linejoin="round" />
<path d="M106.6 133.4L110 136.8L117.2 129.2" stroke="#c2c2c2" stroke-width="0.8" fill="none" stroke-linecap="round" stroke-linejoin="round" />
<path d="M136.60 132.00L139.40 134.80L142.20 132.00" stroke="#9a9a9a" stroke-width="0.8" fill="none" stroke-linecap="round" stroke-linejoin="round" />
<path d="M1017.80 131.10L1019.60 132.90L1021.40 131.10" stroke="#666" stroke-width="0.8" fill="none" stroke-linecap="round" stroke-linejoin="round" />
<path d="M427.7 533.9V516.6Q427.7 513.2 431.1 513.2H483.3Q486.7 513.2 486.7 516.6V533.9Z" fill="#fff"/>
<rect x="434.00" y="529.10" width="45.00" height="1.30" rx="0" fill="#107c41" stroke="none" stroke-width="0.9" />
<rect x="633.60" y="517.90" width="386.60" height="10.90" rx="5.4" fill="#f4f4f4" stroke="none" stroke-width="0.9" />
<rect x="644.60" y="520.40" width="162.40" height="5.80" rx="2.9" fill="#767676" stroke="none" stroke-width="0.9" />
<rect x="833.00" y="534.50" width="27.00" height="2.00" rx="1" fill="#d0d0d0" stroke="none" stroke-width="0.9" />
<path d="M129.5 518.4V528.6" stroke="#cdcdcd" stroke-width="0.7" fill="none" stroke-linecap="round" stroke-linejoin="round" />
<path d="M205.7 518.4V528.6" stroke="#cdcdcd" stroke-width="0.7" fill="none" stroke-linecap="round" stroke-linejoin="round" />
<path d="M263.3 518.4V528.6" stroke="#cdcdcd" stroke-width="0.7" fill="none" stroke-linecap="round" stroke-linejoin="round" />
<path d="M321 518.4V528.6" stroke="#cdcdcd" stroke-width="0.7" fill="none" stroke-linecap="round" stroke-linejoin="round" />
<path d="M423.7 518.4V528.6" stroke="#cdcdcd" stroke-width="0.7" fill="none" stroke-linecap="round" stroke-linejoin="round" />
<path d="M488.4 518.4V528.6" stroke="#cdcdcd" stroke-width="0.7" fill="none" stroke-linecap="round" stroke-linejoin="round" />
<path d="M21.2 519.9L17.5 523.2L21.2 526.5" stroke="#a2a2a2" stroke-width="1.25" fill="none" stroke-linecap="round" stroke-linejoin="round" />
<path d="M39 519.9L42.7 523.2L39 526.5" stroke="#5a5a5a" stroke-width="1.35" fill="none" stroke-linecap="round" stroke-linejoin="round" />
<circle cx="577.0" cy="523.2" r="0.85" fill="#333" stroke="none" stroke-width="0.9"/>
<circle cx="578.9" cy="523.2" r="0.85" fill="#333" stroke="none" stroke-width="0.9"/>
<circle cx="580.8" cy="523.2" r="0.85" fill="#333" stroke="none" stroke-width="0.9"/>
<path d="M596.8 523.3H604.2M600.5 519.6V527" stroke="#444" stroke-width="0.9" fill="none" stroke-linecap="round" stroke-linejoin="round" />
<circle cx="622.3" cy="521.4" r="0.8" fill="#333" stroke="none" stroke-width="0.9"/>
<circle cx="622.3" cy="523.6" r="0.8" fill="#333" stroke="none" stroke-width="0.9"/>
<circle cx="622.3" cy="525.8000000000001" r="0.8" fill="#333" stroke="none" stroke-width="0.9"/>
<path d="M637 523.4L640.4 521.2V525.6Z" fill="#5a5a5a"/>
<path d="M1017.6 523.4L1013.4 520.8V526Z" fill="#4a4a4a"/>
<rect x="66.9" y="506.7" width="66.6" height="33.7" fill="none" stroke="#ed1c24" stroke-width="2.8"/>
<rect x="422.5" y="506.7" width="76" height="33.4" fill="none" stroke="#ed1c24" stroke-width="2.8"/>
<path d="M101 548.8L126.2 576.5H114.4V605.4H87.8V576.5H75.6Z" fill="none" stroke="#ed1c24" stroke-width="2.6" stroke-linejoin="round"/>
<path d="M462 548.8L487.8 570.1H475.6V592.6H448.6V570.1H436.2Z" fill="none" stroke="#ed1c24" stroke-width="2.6" stroke-linejoin="round"/>
</svg>
<div id="labels">
<span class="t" style="left:33.00px;top:13.08px;font-size:7.2px;transform:scaleX(0.898);">AutoSave</span>
<span class="t" style="left:82.80px;top:13.38px;font-size:7px;color:#3a3a3a;transform:scaleX(0.976);">Off</span>
<span class="t" style="left:199.80px;top:12.45px;font-size:8.7px;transform:scaleX(0.892);">2025-12-26 Betaminic data snapshot v7 PUBLIC....</span>
<span class="t" style="left:435.60px;top:11.85px;font-size:9.1px;color:#5a5a5a;transform:scaleX(0.944);">Search</span>
<span class="t" style="left:915.90px;top:12.78px;font-size:7px;color:#ffffff;transform:scaleX(0.891);">TW</span>
<span class="t" style="left:922.30px;top:38.45px;font-size:9.1px;transform:scaleX(1.021);">Comments</span>
<span class="t" style="left:991.40px;top:38.45px;font-size:9.1px;color:#ffffff;transform:scaleX(0.939);">Share</span>
<span class="t" style="left:14.00px;top:39.00px;font-size:8.8px;transform:scaleX(0.937);">File</span>
<span class="t" style="left:45.30px;top:39.00px;font-size:8.8px;font-weight:700;transform:scaleX(1.031);">Home</span>
<span class="t" style="left:83.30px;top:39.00px;font-size:8.8px;transform:scaleX(1.040);">Insert</span>
<span class="t" style="left:120.00px;top:39.00px;font-size:8.8px;transform:scaleX(1.033);">Draw</span>
<span class="t" style="left:154.30px;top:39.00px;font-size:8.8px;transform:scaleX(1.012);">Page Layout</span>
<span class="t" style="left:218.30px;top:39.00px;font-size:8.8px;transform:scaleX(1.028);">Formulas</span>
<span class="t" style="left:268.50px;top:39.00px;font-size:8.8px;transform:scaleX(1.049);">Data</span>
<span class="t" style="left:302.00px;top:39.00px;font-size:8.8px;transform:scaleX(0.971);">Review</span>
<span class="t" style="left:344.00px;top:39.00px;font-size:8.8px;transform:scaleX(1.057);">View</span>
<span class="t" style="left:376.30px;top:39.00px;font-size:8.8px;transform:scaleX(1.081);">Automate</span>
<span class="t" style="left:430.00px;top:39.00px;font-size:8.8px;transform:scaleX(1.078);">Help</span>
<span class="t" style="left:19.00px;top:82.75px;font-size:8.3px;transform:scaleX(0.811);">Paste</span>
<span class="t" style="left:22.60px;top:108.89px;font-size:7.6px;color:#444;transform:scaleX(0.966);">Clipboard</span>
<span class="t" style="left:87.60px;top:64.75px;font-size:8.3px;transform:scaleX(0.953);">Calibri</span>
<span class="t" style="left:166.20px;top:64.75px;font-size:8.3px;transform:scaleX(0.846);">11</span>
<span class="t" style="left:202.00px;top:63.22px;font-size:10.4px;color:#3b3b3b;transform:scaleX(1.038);">A</span>
<span class="t" style="left:220.00px;top:64.70px;font-size:8.8px;color:#3b3b3b;transform:scaleX(1.055);">A</span>
<span class="t" style="left:91.00px;top:85.10px;font-size:8.6px;font-weight:700;transform:scaleX(0.852);">B</span>
<span class="t" style="left:108.50px;top:85.00px;font-size:8.8px;font-style:italic;transform:scaleX(1.223);font-family:'Liberation Serif',serif;">I</span>
<span class="t" style="left:124.50px;top:84.70px;font-size:8.4px;transform:scaleX(0.957);text-decoration:underline;text-underline-offset:1px;">U</span>
<span class="t" style="left:210.60px;top:83.61px;font-size:9.2px;color:#3b3b3b;transform:scaleX(1.075);">A</span>
<span class="t" style="left:146.20px;top:108.89px;font-size:7.6px;color:#444;transform:scaleX(0.855);">Font</span>
<span class="t" style="left:354.30px;top:64.75px;font-size:8.3px;transform:scaleX(0.953);">Wrap Text</span>
<span class="t" style="left:354.00px;top:85.75px;font-size:8.3px;transform:scaleX(0.966);">Merge &amp; Center</span>
<span class="t" style="left:316.80px;top:108.89px;font-size:7.6px;color:#444;transform:scaleX(0.909);">Alignment</span>
<span class="t" style="left:446.30px;top:64.75px;font-size:8.3px;transform:scaleX(0.904);">General</span>
<span class="t" style="left:474.30px;top:83.74px;font-size:12px;color:#444;">%</span>
<span class="t" style="left:473.80px;top:108.89px;font-size:7.6px;color:#444;transform:scaleX(0.925);">Number</span>
<span class="t" style="left:555.80px;top:81.75px;font-size:8.3px;">Conditional</span>
<span class="t" style="left:553.80px;top:92.25px;font-size:8.3px;transform:scaleX(0.971);">Formatting</span>
<span class="t" style="left:604.50px;top:81.75px;font-size:8.3px;transform:scaleX(0.937);">Format as</span>
<span class="t" style="left:609.30px;top:92.25px;font-size:8.3px;transform:scaleX(0.917);">Table</span>
<span class="t" style="left:651.80px;top:81.75px;font-size:8.3px;transform:scaleX(0.839);">Cell</span>
<span class="t" style="left:643.80px;top:92.25px;font-size:8.3px;transform:scaleX(0.907);">Styles</span>
<span class="t" style="left:603.30px;top:108.89px;font-size:7.6px;color:#444;transform:scaleX(0.831);">Styles</span>
<span class="t" style="left:688.80px;top:82.75px;font-size:8.3px;transform:scaleX(0.901);">Insert</span>
<span class="t" style="left:715.80px;top:82.75px;font-size:8.3px;transform:scaleX(0.959);">Delete</span>
<span class="t" style="left:744.30px;top:81.55px;font-size:8.3px;transform:scaleX(0.951);">Format</span>
<span class="t" style="left:720.00px;top:108.89px;font-size:7.6px;color:#444;transform:scaleX(0.847);">Cells</span>
<span class="t" style="left:798.30px;top:59.15px;font-size:8.3px;transform:scaleX(0.929);">AutoSum</span>
<span class="t" style="left:798.00px;top:76.55px;font-size:8.3px;transform:scaleX(0.943);">Fill</span>
<span class="t" style="left:798.00px;top:93.55px;font-size:8.3px;transform:scaleX(0.923);">Clear</span>
<span class="t" style="left:857.50px;top:81.75px;font-size:8.3px;transform:scaleX(0.954);">Sort &amp;</span>
<span class="t" style="left:856.30px;top:92.15px;font-size:8.3px;transform:scaleX(0.976);">Filter</span>
<span class="t" style="left:888.30px;top:81.75px;font-size:8.3px;transform:scaleX(0.959);">Find &amp;</span>
<span class="t" style="left:885.80px;top:92.15px;font-size:8.3px;transform:scaleX(0.932);">Select</span>
<span class="t" style="left:837.50px;top:108.89px;font-size:7.6px;color:#444;transform:scaleX(0.938);">Editing</span>
<span class="t" style="left:928.80px;top:81.55px;font-size:8.3px;">Add-ins</span>
<span class="t" style="left:930.00px;top:109.49px;font-size:7.6px;color:#444;transform:scaleX(0.944);">Add-ins</span>
<span class="t" style="left:970.50px;top:82.75px;font-size:8.3px;transform:scaleX(1.018);">Copilot</span>
<span class="t" style="left:9.30px;top:128.55px;font-size:8.9px;transform:scaleX(0.923);">AD17</span>
<span class="t" style="left:124.30px;top:127.67px;font-size:10.5px;font-weight:700;font-style:italic;transform:scaleX(0.857);font-family:'Liberation Serif',serif;">f</span>
<span class="t" style="left:127.40px;top:129.79px;font-size:8.2px;font-weight:700;font-style:italic;transform:scaleX(0.877);font-family:'Liberation Serif',serif;">x</span>
<span class="t" style="left:81.80px;top:519.90px;font-size:9.0px;color:#3a3a3a;transform:scaleX(1.020);">Snapshot</span>
<span class="t" style="left:138.40px;top:519.90px;font-size:9.0px;color:#3a3a3a;transform:scaleX(1.040);">Edit 1 In Profit</span>
<span class="t" style="left:214.60px;top:519.90px;font-size:9.0px;color:#3a3a3a;transform:scaleX(1.021);">Edit 2 TW</span>
<span class="t" style="left:272.20px;top:519.90px;font-size:9.0px;color:#3a3a3a;transform:scaleX(1.019);">Edit 3 TW</span>
<span class="t" style="left:330.00px;top:519.90px;font-size:9.0px;color:#3a3a3a;transform:scaleX(1.017);">Edit 5 TW Best const</span>
<span class="t" style="left:434.10px;top:518.20px;font-size:9.0px;font-weight:700;color:#1f1f1f;transform:scaleX(0.945);">Edit 6 Lays</span>
<span class="t" style="left:499.20px;top:519.90px;font-size:9.0px;color:#3a3a3a;transform:scaleX(0.981);clip-path:inset(-2px 0 -2px 1.2px);">Edit 7 TW Edit Co</span>
</div>
</div>
</body></html>
